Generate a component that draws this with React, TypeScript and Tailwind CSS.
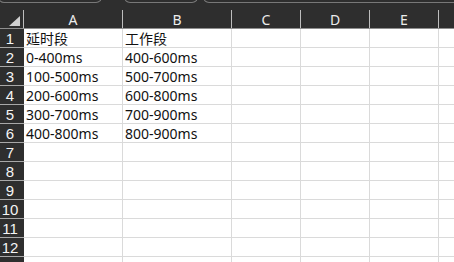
const COLS = ["A", "B", "C", "D", "E", ""];

const ROWS: string[][] = [
  ["延时段", "工作段"],
  ["0-400ms", "400-600ms"],
  ["100-500ms", "500-700ms"],
  ["200-600ms", "600-800ms"],
  ["300-700ms", "700-900ms"],
  ["400-800ms", "800-900ms"],
];

const GRID = "grid grid-cols-[24px_99px_109px_69px_69px_69px_1fr]";

function Tab({ className }: { className: string }) {
  return <div className={`h-[6px] -mt-[3px] border border-[#787878] rounded-b-[6px] ${className}`} />;
}

export default function App() {
  return (
    <div className="w-[454px] h-[262px] overflow-hidden bg-white font-['Noto_Sans','Noto_Sans_CJK_SC',sans-serif]">
      {/* top strip with tabs */}
      <div className="h-[10px] bg-[#2e2e2e] flex overflow-hidden">
        <Tab className="w-[104px] -ml-[2px]" />
        <Tab className="w-[74px] ml-[22px]" />
        <Tab className="flex-1 ml-[5px] -mr-[10px]" />
      </div>

      {/* column header */}
      <div className={`${GRID} h-[19px] bg-[#2e2e2e] border-b border-[#8e8e8e]`}>
        <div className="border-r border-[#bdbdbd] flex items-end justify-end pr-[3px] pb-[2px]">
          <svg width="11" height="10" viewBox="0 0 11 10">
            <polygon points="11,0 11,10 0,10" fill="#d0d0d0" />
          </svg>
        </div>
        {COLS.map((c, i) => (
          <div
            key={i}
            className={`${i < 5 ? "border-r border-[#bdbdbd]" : ""} flex items-center justify-center text-[14px] leading-none text-[#ececec] pt-[1px]`}
          >
            {c}
          </div>
        ))}
      </div>

      {/* rows (the 13th is only a sliver at the bottom) */}
      {Array.from({ length: 13 }, (_, r) => (
        <div key={r} className={`${GRID} h-[19px]`}>
          <div className="bg-[#2e2e2e] border-b border-[#a8a8a8] flex items-center justify-center pr-[4px] text-[15px] leading-none text-[#f4f4f4] font-['Liberation_Sans',sans-serif]">
            {r < 12 ? r + 1 : ""}
          </div>
          {COLS.map((_, c) => (
            <div
              key={c}
              className={`${c < 5 ? "border-r" : ""} border-b border-[#dadada] flex items-center pl-[2px] pt-[1px] text-[14px] leading-none text-[#111] whitespace-nowrap overflow-hidden`}
            >
              {ROWS[r]?.[c] ?? ""}
            </div>
          ))}
        </div>
      ))}
    </div>
  );
}
